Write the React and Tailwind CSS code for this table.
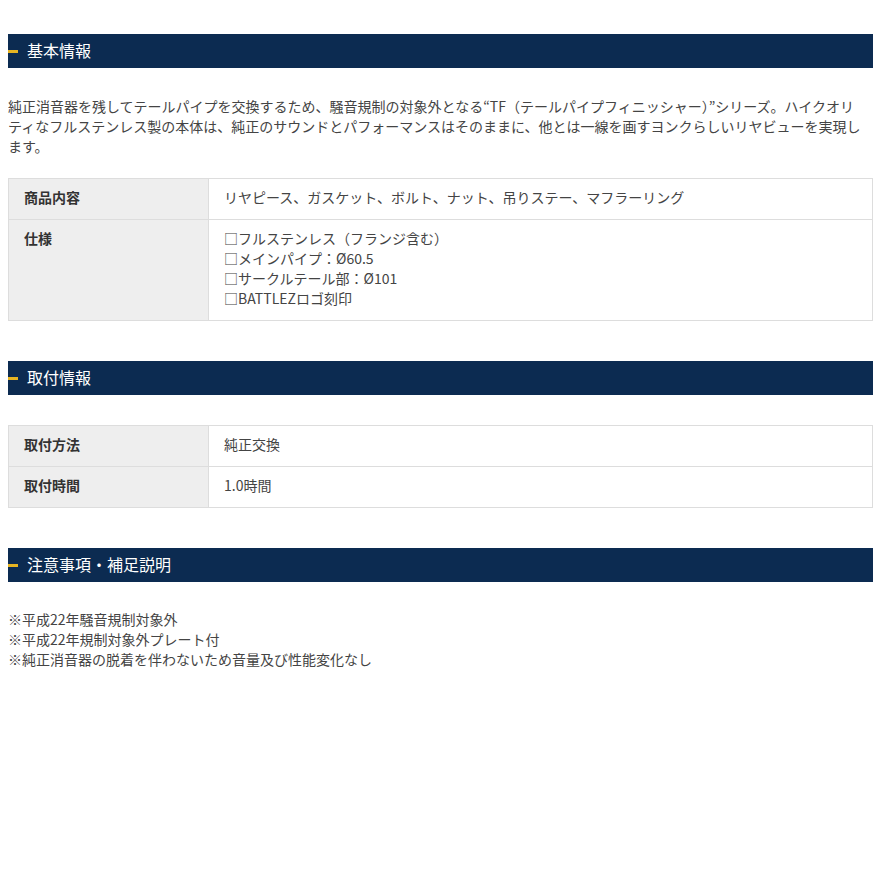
const font = { fontFamily: '"Noto Sans CJK JP", "Noto Sans", sans-serif' };

function SectionTitle({ children }) {
  return (
    <div className="flex items-center h-[34px] bg-[#0c2b51]">
      <span className="w-[10px] h-[3px] bg-[#e6b422]" />
      <h2 className="ml-[9px] -mt-[3px] text-[16px] leading-none text-white">{children}</h2>
    </div>
  );
}

function SpecTable({ rows }) {
  return (
    <table className="w-full border-collapse text-[14px] leading-[20px]">
      <tbody>
        {rows.map(([label, value]) => (
          <tr key={label}>
            <th className="w-[200px] border border-[#dddddd] bg-[#eeeeee] pl-[15px] pr-4 pt-[8px] pb-[12px] text-left align-top font-bold text-[#333333]">
              {label}
            </th>
            <td className="border border-[#dddddd] pl-[15px] pr-4 pt-[8px] pb-[12px] align-top text-[#444444]">
              {Array.isArray(value)
                ? value.map((v) => <div key={v}>{v}</div>)
                : value}
            </td>
          </tr>
        ))}
      </tbody>
    </table>
  );
}

export default function App() {
  return (
    <div className="min-h-[881px] bg-white px-2 pt-[34px]" style={font}>
      <SectionTitle>基本情報</SectionTitle>
      <p className="mt-[28px] mr-2 text-[14px] leading-[20px] text-[#444444]">
        純正消音器を残してテールパイプを交換するため、騒音規制の対象外となる“TF（テールパイプフィニッシャー）”シリーズ。ハイクオリティなフルステンレス製の本体は、純正のサウンドとパフォーマンスはそのままに、他とは一線を画すヨンクらしいリヤビューを実現します。
      </p>
      <div className="mt-[22px]">
        <SpecTable
          rows={[
            ["商品内容", "リヤピース、ガスケット、ボルト、ナット、吊りステー、マフラーリング"],
            [
              "仕様",
              [
                "□フルステンレス（フランジ含む）",
                "□メインパイプ：Ø60.5",
                "□サークルテール部：Ø101",
                "□BATTLEZロゴ刻印",
              ],
            ],
          ]}
        />
      </div>

      <div className="mt-[40px]">
        <SectionTitle>取付情報</SectionTitle>
      </div>
      <div className="mt-[30px]">
        <SpecTable
          rows={[
            ["取付方法", "純正交換"],
            ["取付時間", "1.0時間"],
          ]}
        />
      </div>

      <div className="mt-[40px]">
        <SectionTitle>注意事項・補足説明</SectionTitle>
      </div>
      <div className="mt-[27px] text-[14px] leading-[20px] text-[#444444]">
        <p>※平成22年騒音規制対象外</p>
        <p>※平成22年規制対象外プレート付</p>
        <p>※純正消音器の脱着を伴わないため音量及び性能変化なし</p>
      </div>
    </div>
  );
}
